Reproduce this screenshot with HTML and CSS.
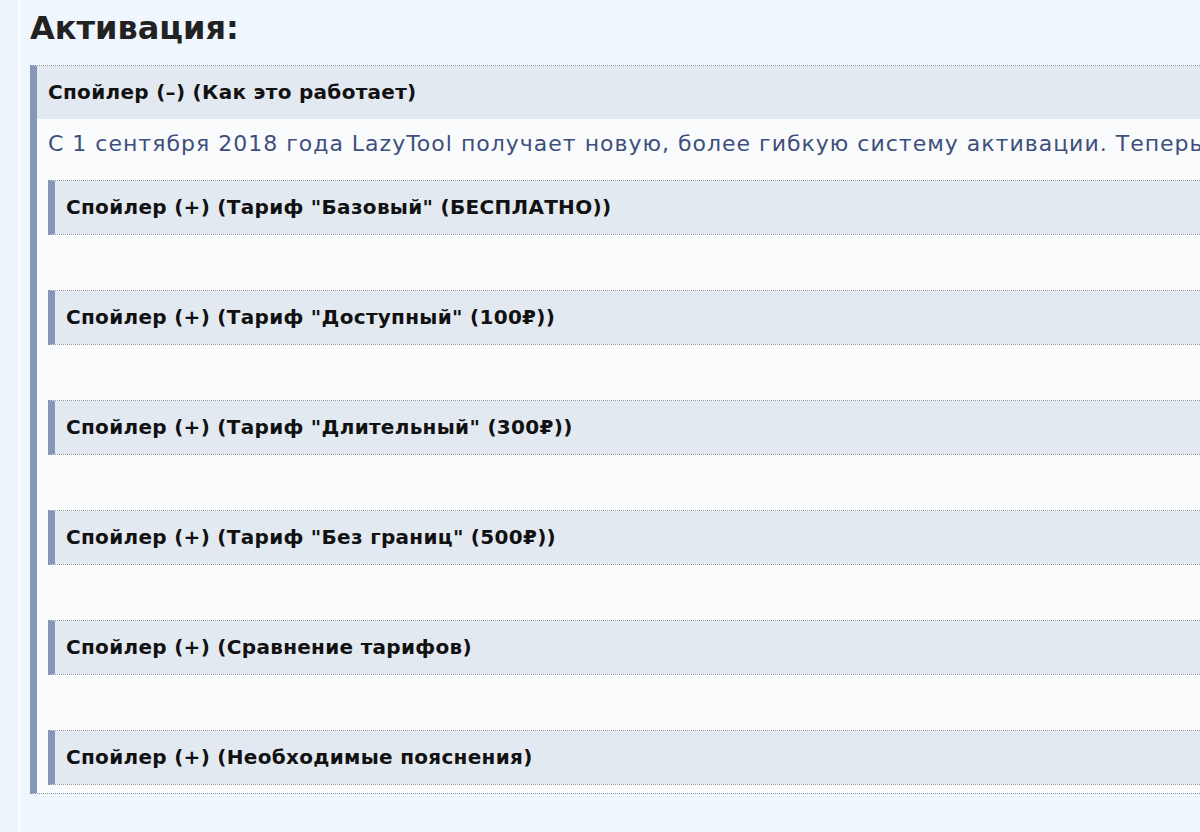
FILE: index.html
```html
<!DOCTYPE html>
<html>
<head>
<meta http-equiv="Content-Type" content="text/html; charset=utf-8">
<title>Активация</title>
<link rel="stylesheet" href="styles.css">
</head>
<body>
<div class="page">
<h2 class="title">Активация:</h2>
<div class="spoiler outer">
  <div class="spoiler-head">Спойлер (–) (Как это работает)</div>
  <div class="spoiler-body">
    <p class="lead">С 1 сентября 2018 года LazyTool получает новую, более гибкую систему активации. Теперь вы можете выбрать тариф, который подходит именно вам.</p>
    <div class="spoiler inner"><div class="spoiler-head">Спойлер (+) (Тариф "Базовый" (БЕСПЛАТНО))</div></div>
    <div class="spoiler inner"><div class="spoiler-head">Спойлер (+) (Тариф "Доступный" (100₽))</div></div>
    <div class="spoiler inner"><div class="spoiler-head">Спойлер (+) (Тариф "Длительный" (300₽))</div></div>
    <div class="spoiler inner"><div class="spoiler-head">Спойлер (+) (Тариф "Без границ" (500₽))</div></div>
    <div class="spoiler inner"><div class="spoiler-head">Спойлер (+) (Сравнение тарифов)</div></div>
    <div class="spoiler inner"><div class="spoiler-head">Спойлер (+) (Необходимые пояснения)</div></div>
  </div>
</div>
</div>
</body>
</html>
```

FILE: styles.css
```css
html, body { margin: 0; padding: 0; overflow: hidden; }
body {
	background-color: #eef4fb;
	font-family: "DejaVu Sans", Verdana, sans-serif;
}
.page {
	margin-left: 18px;
	border-left: 2px solid #fafcff;
	background-color: #f0f6fd;
	padding: 10px 0 0 10px;
	min-height: 832px;
	width: 1500px;
}
.title {
	margin: 0 0 19px 0;
	font-size: 32px;
	line-height: 36px;
	font-weight: bold;
	color: #222;
}

.spoiler {
	border-left: 7px solid #8596b8;
	border-top: 1px dotted #999;
	border-bottom: 1px dotted #999;
}
.spoiler-head {
	background-color: #e3e9f1;
	color: #111;
	font-weight: bold;
	font-size: 20px;
	letter-spacing: 0.3px;
	line-height: 53px;
	padding-left: 11px;
	white-space: nowrap;
}
.spoiler-body {
	background-color: #f9fbfd;
	padding: 8px 0 8px 11px;
}
.lead {
	margin: 0 0 19px 0;
	font-size: 22px;
	letter-spacing: 1px;
	line-height: 34px;
	color: #3e4f7c;
	white-space: nowrap;
}
.inner { margin-bottom: 55px; }
.inner:last-child { margin-bottom: 0; }
```
